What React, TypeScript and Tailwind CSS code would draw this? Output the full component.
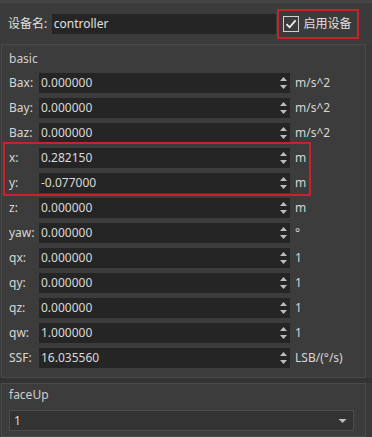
import React from "react";

const font = {
  fontFamily: '"Noto Sans", "Noto Sans CJK SC", sans-serif',
};

type Row = { label: string; value: string; unit: string };

const rows: Row[] = [
  { label: "Bax:", value: "0.000000", unit: "m/s^2" },
  { label: "Bay:", value: "0.000000", unit: "m/s^2" },
  { label: "Baz:", value: "0.000000", unit: "m/s^2" },
  { label: "x:", value: "0.282150", unit: "m" },
  { label: "y:", value: "-0.077000", unit: "m" },
  { label: "z:", value: "0.000000", unit: "m" },
  { label: "yaw:", value: "0.000000", unit: "°" },
  { label: "qx:", value: "0.000000", unit: "1" },
  { label: "qy:", value: "0.000000", unit: "1" },
  { label: "qz:", value: "0.000000", unit: "1" },
  { label: "qw:", value: "1.000000", unit: "1" },
  { label: "SSF:", value: "16.035560", unit: "LSB/(°/s)" },
];

function Spin() {
  return (
    <svg width="9" height="18" viewBox="0 0 9 18" className="shrink-0">
      <path d="M1 7 L4.5 3 L8 7 Z" fill="#bdbdbd" />
      <path d="M1 11 L4.5 15 L8 11 Z" fill="#bdbdbd" />
    </svg>
  );
}

function FieldRow({ r }: { r: Row }) {
  return (
    <div className="flex items-center h-[20px]">
      <div className="w-[30px] text-[12px] text-[#d6d6d6] leading-none">{r.label}</div>
      <div className="w-[251px] h-[20px] bg-[#252525] flex items-center pl-[2px] pr-[2px]">
        <span className="flex-1 text-[12px] text-[#dadada] leading-none">{r.value}</span>
        <Spin />
      </div>
      <div className="pl-[5px] text-[12px] text-[#d6d6d6] leading-none">{r.unit}</div>
    </div>
  );
}

export default function App() {
  return (
    <div style={font} className="w-[372px] h-[437px] bg-[#393939] overflow-hidden flex flex-col">
      {/* header */}
      <div className="h-[44px] bg-[#3b3b3b] border-t-[3px] border-[#444444] flex items-center pl-[8px] pr-[13px] relative">
        <span className="text-[12px] text-[#e0e0e0] w-[44px]">设备名:</span>
        <div className="w-[226px] h-[20px] bg-[#252525] flex items-center pl-[2px]">
          <span className="text-[12px] text-[#e0e0e0]">controller</span>
        </div>
        <div className="ml-[1px] h-[30px] w-[82px] border-2 border-[#c8222a] flex items-center pl-[4px] gap-[4px]">
          <div className="w-[16px] h-[16px] border border-[#d0d0d0] flex items-center justify-center">
            <svg width="12" height="12" viewBox="0 0 12 12">
              <path d="M1.5 6.2 L4.6 9.3 L10.6 2.4" stroke="#f0f0f0" strokeWidth="1.8" fill="none" />
            </svg>
          </div>
          <span className="text-[12px] text-[#e0e0e0]">启用设备</span>
        </div>
      </div>
      {/* basic group */}
      <div className="h-[334px] mx-[1px] mr-[6px] border border-[#4a4a4a] bg-[#3c3c3c] flex flex-col">
        <div className="h-[26px] flex items-center pl-[7px] text-[12px] text-[#cfcfcf] pt-[2px]">basic</div>
        <div className="relative flex flex-col gap-[5px] pl-[7px] pt-[2px]">
          {rows.map((r) => (
            <FieldRow key={r.label} r={r} />
          ))}
          <div className="absolute left-[1px] top-[71px] w-[308px] h-[54px] border-2 border-[#c8222a]" />
        </div>
      </div>
      <div className="h-[5px] bg-[#333333]" />
      {/* faceUp group */}
      <div className="flex-1 mx-[1px] mr-[6px] border border-[#4a4a4a] bg-[#3c3c3c] flex flex-col">
        <div className="h-[20px] flex items-center pl-[7px] text-[12px] text-[#cfcfcf] pt-[2px]">faceUp</div>
        <div className="pl-[7px] pr-[11px] pt-[6px]">
          <div className="h-[21px] bg-[#333333] border border-[#4c4c4c] flex items-center pl-[4px] pr-[6px]">
            <span className="flex-1 text-[12px] text-[#dadada]">1</span>
            <svg width="9" height="6" viewBox="0 0 9 6">
              <path d="M0.5 1 L8.5 1 L4.5 5 Z" fill="#bdbdbd" />
            </svg>
          </div>
        </div>
      </div>
    </div>
  );
}
